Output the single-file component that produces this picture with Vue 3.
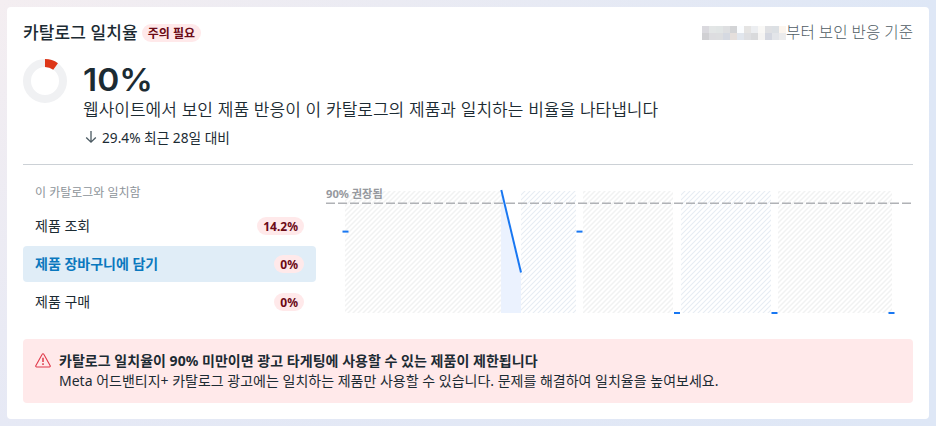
<script setup>
import { ref } from 'vue'

// 이벤트별 일치율
const events = ref([
  { id: 'view', name: '제품 조회', rate: '14.2%' },
  { id: 'cart', name: '제품 장바구니에 담기', rate: '0%' },
  { id: 'buy', name: '제품 구매', rate: '0%' }
])
const selected = ref('cart')

// 날짜는 모자이크 처리
const mosaic = [
  ['#dad9de', '#e3e6e6', '#e1e5e5', '#dedfe1', '#d3d4d6', '#fbfdff', '#e5e4e3', '#eceef1', '#f9f8f6', '#dfe0e3', '#dce0e4', '#fcf5ee'],
  ['#d0d0d3', '#dddde0', '#dddee0', '#d5d9e1', '#e5dfdc', '#e1e6ed', '#dedfe2', '#d9dadc', '#f5f4f3', '#d4d7e0', '#e3e5e9', '#ececed']
]

// 데이터가 없는 구간
const gaps = [
  { x: 19, width: 156, fill: 'url(#hatch-gray)' },
  { x: 195, width: 55, fill: 'url(#hatch-blue)' },
  { x: 257, width: 90, fill: 'url(#hatch-gray)' },
  { x: 355, width: 90, fill: 'url(#hatch-blue)' },
  { x: 452, width: 114, fill: 'url(#hatch-gray)' }
]

// 값이 하나뿐인 날
const dots = [
  { x: 16.5, y: 45.6 },
  { x: 250.5, y: 45.6 },
  { x: 348, y: 127 },
  { x: 445.5, y: 127 },
  { x: 562.5, y: 127 }
]
</script>

<template>
  <div class="page">
    <div class="card">
      <div class="header">
        <h1>카탈로그 일치율</h1>
        <span class="badge">주의 필요</span>
        <div class="since">
          <div class="mosaic">
            <div v-for="(row, i) in mosaic" :key="i" class="mosaic-row">
              <i v-for="(color, j) in row" :key="j" :style="{ background: color }"></i>
            </div>
          </div>
          <span>부터 보인 반응 기준</span>
        </div>
      </div>

      <div class="summary">
        <svg class="donut" width="44" height="44" viewBox="0 0 44 44">
          <circle cx="22" cy="22" r="18" fill="none" stroke="#f0f1f3" stroke-width="8" />
          <path d="M22 4A18 18 0 0 1 32.58 7.44" fill="none" stroke="#dd3517" stroke-width="8" />
        </svg>
        <div class="summary-text">
          <div class="rate">10%</div>
          <p class="desc">웹사이트에서 보인 제품 반응이 이 카탈로그의 제품과 일치하는 비율을 나타냅니다</p>
          <div class="compare">
            <svg width="12" height="14" viewBox="0 0 12 14">
              <path d="M6 1v11M1.2 7.5L6 12.2l4.800-4.700" fill="none" stroke="#4b5a62" stroke-width="1.3" />
            </svg>
            <span>29.4% 최근 28일 대비</span>
          </div>
        </div>
      </div>

      <div class="detail">
        <div class="events">
          <div class="events-title">이 카탈로그와 일치함</div>
          <div
            v-for="event in events"
            :key="event.id"
            class="event"
            :class="{ active: selected === event.id }"
            @click="selected = event.id"
          >
            <span class="event-name">{{ event.name }}</span>
            <span class="badge">{{ event.rate }}</span>
          </div>
        </div>

        <svg class="chart" width="587" height="134" viewBox="0 0 587 134">
          <defs>
            <pattern id="hatch-gray" width="5" height="5" patternUnits="userSpaceOnUse">
              <path d="M-1 1L1-1M0 5L5 0M4 6L6 4" stroke="#f1f2f2" stroke-width="1.5" />
            </pattern>
            <pattern id="hatch-blue" width="5" height="5" patternUnits="userSpaceOnUse">
              <path d="M-1 1L1-1M0 5L5 0M4 6L6 4" stroke="#e7ecf3" stroke-width="1.1" />
            </pattern>
          </defs>
          <rect v-for="gap in gaps" :key="gap.x" :x="gap.x" y="6" :width="gap.width" height="122" :fill="gap.fill" />
          <path d="M175 6L195 87V128H175Z" fill="#ebf2fe" />
          <text class="chart-label" x="0" y="13">90% 권장됨</text>
          <path d="M0 18.200H586" stroke="#b0b2b6" stroke-width="1.500" stroke-dasharray="9 3" />
          <path d="M175.300 5L195 87.500" fill="none" stroke="#1877f2" stroke-width="2" />
          <rect v-for="dot in dots" :key="dot.x" :x="dot.x" :y="dot.y" width="6" height="2" fill="#1877f2" />
        </svg>
      </div>

      <div class="alert">
        <svg width="16" height="15" viewBox="0 0 16 15">
          <path d="M7.200 1.200a.9.9 0 0 1 1.600 0l6.400 11.500a.9.9 0 0 1-.8 1.300H1.600a.9.9 0 0 1-.8-1.300z" fill="none" stroke="#e0394a" stroke-width="1.100" />
          <path d="M8 4.800v4.200M8 10.300v1.700" stroke="#e0394a" stroke-width="1.500" />
        </svg>
        <div>
          <div class="alert-title">카탈로그 일치율이 90% 미만이면 광고 타게팅에 사용할 수 있는 제품이 제한됩니다</div>
          <div class="alert-text">Meta 어드밴티지+ 카탈로그 광고에는 일치하는 제품만 사용할 수 있습니다. 문제를 해결하여 일치율을 높여보세요.</div>
        </div>
      </div>
    </div>
  </div>
</template>

<style>
body {
  overflow: hidden;
}
</style>

<style scoped>
.page {
  box-sizing: border-box;
  height: 426px;
  padding: 7px;
  background: linear-gradient(90deg, rgba(222, 233, 248, 0), #dee7f6), linear-gradient(#f4eef1, #e6e9f5);
  color: #1c2b33;
  font-family: 'Noto Sans', 'Noto Sans CJK KR', sans-serif;
  font-size: 14px;
  white-space: nowrap;
}

.card {
  box-sizing: border-box;
  height: 412px;
  padding: 16px;
  border-radius: 4px;
  background: #fff;
}

.header {
  display: flex;
  align-items: center;
  height: 20px;
}

h1 {
  margin: 0 4px 0 0;
  font-size: 17px;
  font-weight: 500;
  letter-spacing: 0.1px;
  line-height: 20px;
}

.badge {
  height: 18px;
  padding: 0 6px;
  border-radius: 9px;
  background: #ffe9ea;
  color: #6c0a16;
  font-size: 12px;
  font-weight: 700;
  line-height: 19px;
}

.since {
  display: flex;
  align-items: center;
  margin-left: auto;
  color: #4f5c64;
  font-size: 15.6px;
  font-weight: 300;
  line-height: 18px;
}

.since span {
  padding-bottom: 2px;
}

.mosaic-row {
  display: flex;
}

.mosaic-row i {
  width: 7px;
  height: 7px;
}

.summary {
  display: flex;
  gap: 16px;
  height: 105px;
  padding-top: 16px;
  border-bottom: 1px solid #ccd1d6;
}

.rate {
  height: 40px;
  font-family: Inter, sans-serif;
  font-size: 31px;
  font-weight: 600;
  line-height: 42px;
  transform: scaleX(1.08);
  transform-origin: left;
}

.desc {
  margin: 0;
  font-size: 17px;
  font-weight: 350;
  line-height: 21px;
  word-spacing: 0.4px;
}

.compare {
  display: flex;
  align-items: center;
  gap: 5px;
  height: 20px;
  margin-top: 7px;
  padding-left: 2px;
  font-size: 13.7px;
}

.detail {
  display: flex;
  gap: 10px;
  height: 174px;
  padding-top: 20px;
  box-sizing: border-box;
}

.events {
  width: 293px;
}

.events-title {
  height: 23px;
  padding-left: 12px;
  color: #8d949a;
  font-size: 12px;
  line-height: 16px;
}

.event {
  display: flex;
  justify-content: space-between;
  align-items: center;
  box-sizing: border-box;
  height: 36px;
  margin-bottom: 2px;
  padding: 0 12px;
  border-radius: 4px;
  font-size: 14px;
}

.event-name {
  padding-bottom: 2px;
}

.active {
  background: #e0edf7;
  color: #0a78be;
}

.active .event-name {
  font-weight: 700;
}

.chart-label {
  fill: #96999e;
  font-size: 11.2px;
  font-weight: 700;
}

.alert {
  display: flex;
  gap: 8px;
  box-sizing: border-box;
  height: 64px;
  padding: 12px;
  border-radius: 4px;
  background: #ffe9ea;
}

.alert svg {
  margin-top: 2px;
}

.alert-title,
.alert-text {
  line-height: 20px;
}

.alert-title {
  font-weight: 700;
  letter-spacing: 0.03px;
}
</style>
